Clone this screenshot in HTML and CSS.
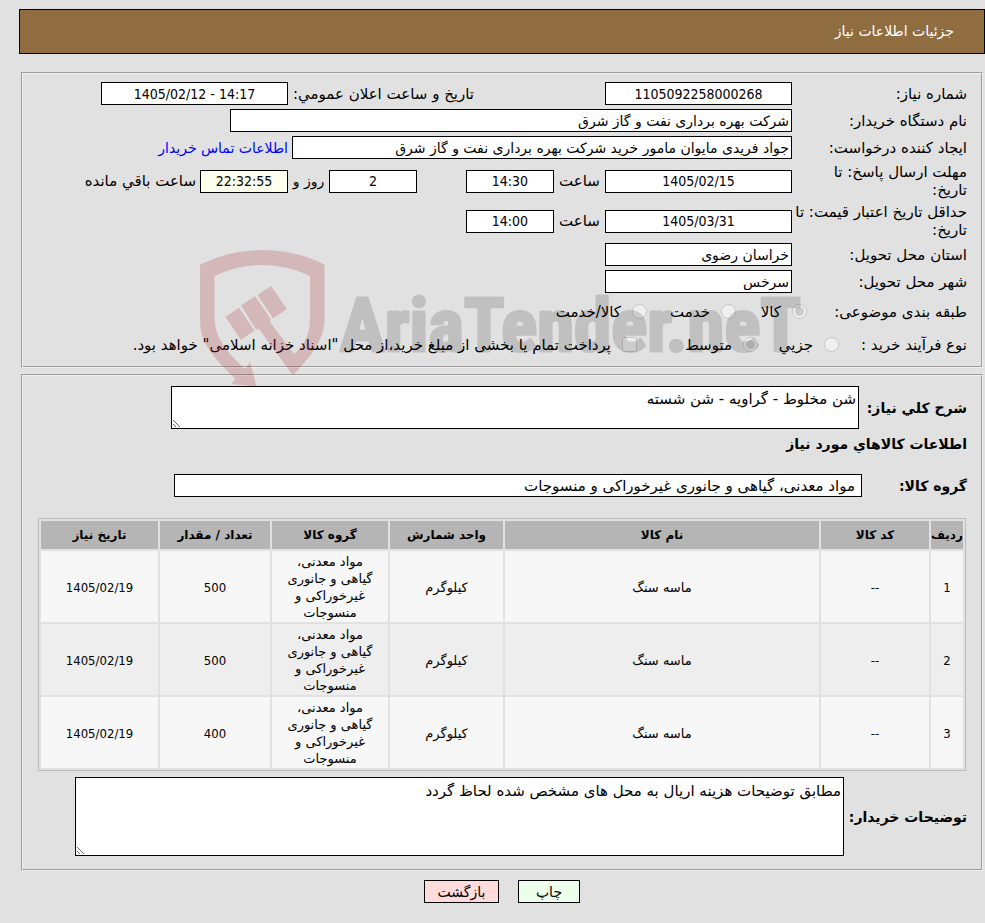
FILE: index.html
```html
<!DOCTYPE html>
<html lang="fa" dir="rtl">
<head>
  <meta charset="UTF-8">
  <meta name="viewport" content="width=device-width, initial-scale=1.0">
  <title>جزئیات اطلاعات نیاز</title>
  <link rel="stylesheet" href="styles.css">
</head>
<body>
  <h1 class="page-title">جزئیات اطلاعات نیاز</h1>

  <form class="need-form">
    <fieldset class="panel info">
      <div class="row">
        <label class="row-label" for="needNo">شماره نیاز:</label>
        <input type="text" class="box medium center" id="needNo" value="1105092258000268" readonly>
        <label class="announce" for="announceDate">تاریخ و ساعت اعلان عمومي:</label>
        <input type="text" class="box medium center" id="announceDate" dir="ltr" value="1405/02/12 - 14:17" readonly>
      </div>
      <div class="row">
        <label class="row-label" for="buyer">نام دستگاه خریدار:</label>
        <input type="text" class="box wide" id="buyer" value="شرکت بهره برداری نفت و گاز شرق" readonly>
      </div>
      <div class="row">
        <label class="row-label" for="creator">ایجاد کننده درخواست:</label>
        <input type="text" class="box large" id="creator" value="جواد فریدی مایوان مامور خرید شرکت بهره برداری نفت و گاز شرق" readonly>
        <a class="contact" href="#contact">اطلاعات تماس خریدار</a>
      </div>
      <div class="row">
        <label class="row-label" for="replyDate">مهلت ارسال پاسخ: تا<br>تاریخ:</label>
        <input type="text" class="box medium center" id="replyDate" value="1405/02/15" readonly>
        <label class="unit" for="replyTime">ساعت</label>
        <input type="text" class="box small center" id="replyTime" value="14:30" readonly>
        <input type="text" class="box small center days" id="daysLeft" value="2" readonly>
        <label class="unit-day" for="daysLeft">روز و</label>
        <input type="text" class="box small center timer" id="timeLeft" value="22:32:55" readonly>
        <label class="remain" for="timeLeft">ساعت باقي مانده</label>
      </div>
      <div class="row">
        <label class="row-label" for="priceDate">حداقل تاریخ اعتبار قیمت: تا<br>تاریخ:</label>
        <input type="text" class="box medium center" id="priceDate" value="1405/03/31" readonly>
        <label class="unit" for="priceTime">ساعت</label>
        <input type="text" class="box small center" id="priceTime" value="14:00" readonly>
      </div>
      <div class="row">
        <label class="row-label" for="province">استان محل تحویل:</label>
        <input type="text" class="box medium" id="province" value="خراسان رضوی" readonly>
      </div>
      <div class="row">
        <label class="row-label" for="city">شهر محل تحویل:</label>
        <input type="text" class="box medium" id="city" value="سرخس" readonly>
      </div>
      <div class="row options">
        <span class="category-label">طبقه بندی موضوعی:</span>
        <label class="option goods-option"><input type="radio" name="category" checked disabled><span>کالا</span></label>
        <label class="option service-option"><input type="radio" name="category" disabled><span>خدمت</span></label>
        <label class="option"><input type="radio" name="category" disabled><span>کالا/خدمت</span></label>
      </div>
      <div class="row options">
        <span class="process-label">نوع فرآیند خرید :</span>
        <label class="option small-option"><input type="radio" name="process" disabled><span>جزیي</span></label>
        <label class="option middle-option"><input type="radio" name="process" checked disabled><span>متوسط</span></label>
        <label class="option"><input type="checkbox" name="treasury" disabled><span>پرداخت تمام یا بخشی از مبلغ خرید،از محل "اسناد خزانه اسلامی" خواهد بود.</span></label>
      </div>
    </fieldset>

    <fieldset class="panel goods">
      <div class="field">
        <label class="field-label" for="summary">شرح کلي نیاز:</label>
        <textarea class="box summary" id="summary" readonly>شن مخلوط - گراویه - شن شسته</textarea>
      </div>
      <h2 class="section-title">اطلاعات کالاهاي مورد نیاز</h2>
      <div class="field">
        <label class="field-label" for="goodsGroup">گروه کالا:</label>
        <input type="text" class="box group" id="goodsGroup" value="مواد معدنی، گیاهی و جانوری غیرخوراکی و منسوجات" readonly>
      </div>

      <table class="goods-table">
        <thead>
          <tr>
            <th class="col-row">ردیف</th>
            <th class="col-code">کد کالا</th>
            <th>نام کالا</th>
            <th class="col-unit">واحد شمارش</th>
            <th class="col-group">گروه کالا</th>
            <th class="col-count">تعداد / مقدار</th>
            <th class="col-date">تاریخ نیاز</th>
          </tr>
        </thead>
        <tbody>
          <tr>
            <td class="num">1</td>
            <td class="num">--</td>
            <td>ماسه سنگ</td>
            <td>کیلوگرم</td>
            <td>مواد معدنی، گیاهی و جانوری غیرخوراکی و منسوجات</td>
            <td class="num">500</td>
            <td class="num">1405/02/19</td>
          </tr>
          <tr>
            <td class="num">2</td>
            <td class="num">--</td>
            <td>ماسه سنگ</td>
            <td>کیلوگرم</td>
            <td>مواد معدنی، گیاهی و جانوری غیرخوراکی و منسوجات</td>
            <td class="num">500</td>
            <td class="num">1405/02/19</td>
          </tr>
          <tr>
            <td class="num">3</td>
            <td class="num">--</td>
            <td>ماسه سنگ</td>
            <td>کیلوگرم</td>
            <td>مواد معدنی، گیاهی و جانوری غیرخوراکی و منسوجات</td>
            <td class="num">400</td>
            <td class="num">1405/02/19</td>
          </tr>
        </tbody>
      </table>

      <div class="field">
        <label class="field-label notes-label" for="notes">توضیحات خریدار:</label>
        <textarea class="box notes" id="notes" readonly>مطابق توضیحات هزینه اریال به محل های مشخص شده لحاظ گردد</textarea>
      </div>
    </fieldset>

    <!-- Watermark -->
    <svg class="watermark" viewBox="199 248 604 140" direction="ltr" aria-hidden="true">
      <g class="shield">
        <path d="M200 264.500Q230 250 262 250Q296 250 324.500 264.500V320C324 342 309 358 293 375.500L259 329L256 329.500L241 305.500L255 296L271 319.500L270 322L294 354C305 344 310 334 310 318V276Q287 265 262 265Q237 265 214.500 276V320C216 340 230 355 245 369L250 362L256.500 386.500L231 384L235.500 379C219 362 200 347 200 320Z"/>
        <path d="M271 286L287 309L273 318.500L257.500 295Z"/>
        <path d="M239 307.500L254.500 330.500L241 340L225.500 317Z"/>
      </g>
      <text x="340" y="351">AriaTender.neT</text>
    </svg>
  </form>

  <div class="buttons">
    <button type="button" class="print">چاپ</button>
    <button type="button" class="back">بازگشت</button>
  </div>
</body>
</html>
```

FILE: styles.css
```css
* {
  box-sizing: border-box;
}

body {
  margin: 9px 0 0 19px;
  background: #e1e1e1;
  color: #000;
  font-family: "DejaVu Sans", Tahoma, sans-serif;
  font-size: 15px;
  line-height: 18px;
}

input,
textarea,
button {
  font: inherit;
  color: inherit;
}

.page-title {
  margin: 0 0 18px;
  padding: 12px 30px;
  border: 1px solid #000;
  background: #8f6d41;
  color: #fff;
  font-size: 14px;
  font-weight: normal;
  line-height: 19px;
}

.need-form {
  position: relative;
  margin: 0 2px;
}

.panel {
  margin: 0;
  min-width: 0;
  border: 2px groove #f0f0f0;
}

/* Request information */
.info {
  display: flex;
  flex-direction: column;
  gap: 4px;
  margin-bottom: 6px;
  padding: 8px 14px 7px;
}

.row {
  display: flex;
  align-items: center;
  min-height: 23px;
  white-space: nowrap;
}

.row-label {
  flex: none;
  width: 175px;
}

.box {
  margin: 0;
  padding: 0 2px;
  height: 23px;
  border: 1px solid #000;
  border-radius: 0;
  background: #fff;
  outline: none;
}

.row .box {
  font-size: 14px;
}

.row .center {
  font-family: "DejaVu Sans Condensed", Tahoma, sans-serif;
  text-align: center;
}

.small {
  width: 88px;
}

.medium {
  width: 187px;
}

.large {
  width: 500px;
}

.wide {
  width: 562px;
}

.announce {
  width: 317px;
  padding-right: 131px;
}

.contact {
  margin-right: 4px;
  color: #00f;
  font-size: 14px;
  text-decoration: none;
}

.unit {
  width: 51px;
  text-align: center;
}

.days {
  margin-right: 49px;
}

.unit-day {
  width: 41px;
  font-size: 14px;
  text-align: center;
}

.row .timer {
  background: #ffffee;
}

.remain {
  margin-right: 4px;
}

.options {
  min-height: 29px;
}

.category-label {
  width: 160px;
}

.process-label {
  width: 128px;
}

.option {
  display: flex;
  align-items: center;
  gap: 11px;
}

.option input {
  width: 15px;
  height: 15px;
  margin: 0;
}

.goods-option {
  min-width: 71px;
}

.service-option {
  min-width: 89px;
}

.small-option {
  min-width: 81px;
}

.middle-option {
  min-width: 121px;
}

/* Goods */
.goods {
  padding: 10px 14px 13px;
}

.field {
  display: flex;
  align-items: center;
}

.field-label,
.section-title {
  font-size: 14px;
  font-weight: bold;
}

.field-label {
  flex: none;
  width: 105px;
}

.section-title {
  margin: 6px 0 21px;
}

.summary {
  width: 688px;
  height: 43px;
  margin-right: 3px;
  padding: 3px 2px;
}

.group {
  width: 688px;
  padding: 0 6px;
}

.goods-table {
  width: calc(100% - 2px);
  margin: 21px 1px 6px 0;
  border: 1px solid #bdbdbd;
  border-spacing: 2px;
  table-layout: fixed;
  font-size: 13px;
  line-height: 17px;
  text-align: center;
}

.goods-table th {
  height: 28px;
  padding: 0;
  background: #b5b5b5;
  font-size: 12px;
}

.goods-table td {
  padding: 2px 8px 1px;
  background: #f7f7f7;
}

.goods-table tr:nth-child(even) td {
  background: #eee;
}

.goods-table .num {
  font-family: "DejaVu Sans Condensed", Tahoma, sans-serif;
}

.col-row {
  width: 32px;
}

.col-code {
  width: 108px;
}

.col-unit {
  width: 113px;
}

.col-group {
  width: 116px;
}

.col-count {
  width: 110px;
}

.col-date {
  width: 117px;
}

.notes-label {
  width: 123px;
}

.notes {
  width: 769px;
  height: 79px;
  padding: 4px 2px;
}

/* Watermark over the form */
.watermark {
  position: absolute;
  top: 176px;
  left: 178px;
  width: 604px;
  height: 140px;
  overflow: visible;
  pointer-events: none;
}

.shield {
  fill: rgba(170, 43, 45, 0.22);
}

.watermark text {
  fill: #000;
  stroke: #000;
  stroke-width: 3px;
  stroke-linejoin: round;
  opacity: 0.14;
  font-family: "Liberation Sans Narrow", "Roboto Condensed", Roboto, sans-serif;
  font-size: 75px;
  font-weight: bold;
}

/* Buttons */
.buttons {
  display: flex;
  justify-content: center;
  gap: 19px;
  padding: 9px 0 22px;
}

.buttons button {
  height: 23px;
  padding: 0 10px;
  border: 1px solid #000;
  font-size: 14px;
  cursor: pointer;
}

.buttons .print {
  min-width: 62px;
  background: #ebffeb;
}

.buttons .back {
  min-width: 75px;
  background: #ffdbdb;
}
```
